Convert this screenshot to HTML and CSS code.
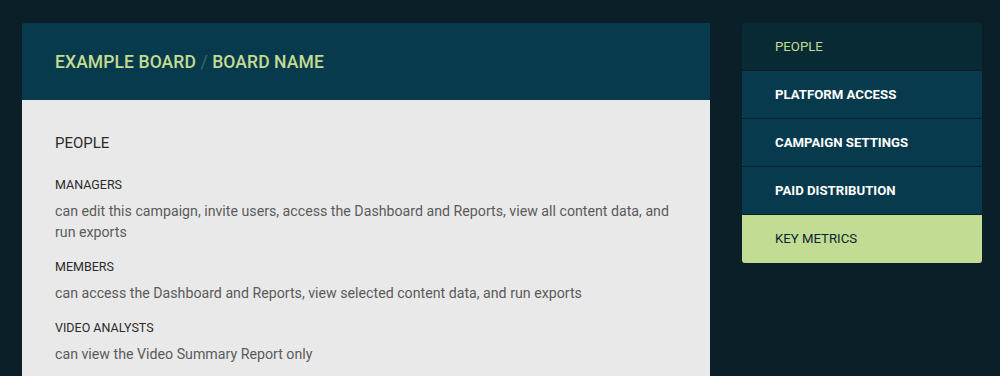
FILE: index.html
```html
<!DOCTYPE html>
<html lang="en">
<head>
  <meta charset="UTF-8">
  <meta name="viewport" content="width=device-width, initial-scale=1.0">
  <title>Board Settings</title>
  <link rel="stylesheet" href="styles.css">
</head>
<body>
  <div class="page">
    <div class="board">
      <div class="board-header">
        <h1>EXAMPLE BOARD <span class="slash">/</span> BOARD NAME</h1>
      </div>
      <div class="board-body">
        <h2>PEOPLE</h2>
        <div class="role">
          <h3>MANAGERS</h3>
          <p>can edit this campaign, invite users, access the Dashboard and Reports, view all content data, and run exports</p>
        </div>
        <div class="role">
          <h3>MEMBERS</h3>
          <p>can access the Dashboard and Reports, view selected content data, and run exports</p>
        </div>
        <div class="role">
          <h3>VIDEO ANALYSTS</h3>
          <p>can view the Video Summary Report only</p>
        </div>
      </div>
    </div>
    <ul class="sidenav">
      <li class="active"><a href="#">PEOPLE</a></li>
      <li><a href="#">PLATFORM ACCESS</a></li>
      <li><a href="#">CAMPAIGN SETTINGS</a></li>
      <li><a href="#">PAID DISTRIBUTION</a></li>
      <li class="highlight"><a href="#">KEY METRICS</a></li>
    </ul>
  </div>
</body>
</html>
```

FILE: styles.css
```css
body{
  margin: 0;
  background-color: #0b1f29;
  font-family: Roboto, 'Liberation Sans', sans-serif;
  overflow: hidden;
}
.page{
  display: flex;
  align-items: flex-start;
  gap: 32px;
  padding: 23px 18px 0 22px;
}
.board{
  width: 688px;
  flex-shrink: 0;
}
.board-header{
  background-color: #073a4c;
  height: 77px;
  display: flex;
  align-items: center;
  padding: 0 33px;
  border-top-left-radius: 2px;
}
.board-header h1{
  margin: 0;
  font-size: 17.5px;
  font-weight: 500;
  color: #c3dc93;
  letter-spacing: 0.1px;
}
.slash{
  color: #3f6b62;
  font-weight: 400;
}
.board-body{
  background-color: #e9e9e9;
  padding: 34px 33px 0;
  height: 242px;
  overflow: hidden;
}
.board-body h2{
  margin: 0 0 25px;
  font-size: 15px;
  font-weight: 400;
  color: #2b2b2b;
}
.role{
  margin-bottom: 16px;
}
.role h3{
  margin: 0 0 9px;
  font-size: 12.5px;
  font-weight: 400;
  color: #2b2b2b;
}
.role p{
  margin: 0;
  font-size: 14.2px;
  line-height: 21px;
  color: #5b5b5b;
}
.sidenav{
  list-style-type: none;
  margin: 0;
  padding: 0;
  width: 240px;
  border-radius: 3px;
  overflow: hidden;
  background-color: #0b1f29;
}
.sidenav li{
  background-color: #073a4c;
  margin-bottom: 1px;
}
.sidenav li a{
  display: block;
  height: 47px;
  line-height: 47px;
  padding-left: 33px;
  color: #ffffff;
  text-decoration: none;
  font-size: 13.2px;
  font-weight: 700;
}
.sidenav li.active{
  background-color: #072a35;
}
.sidenav li.active a{
  color: #c3dc93;
  font-weight: 400;
}
.sidenav li.highlight{
  background-color: #c3dc93;
  margin-bottom: 0;
}
.sidenav li.highlight a{
  height: 48px;
  color: #0b2530;
  font-weight: 400;
}
```
